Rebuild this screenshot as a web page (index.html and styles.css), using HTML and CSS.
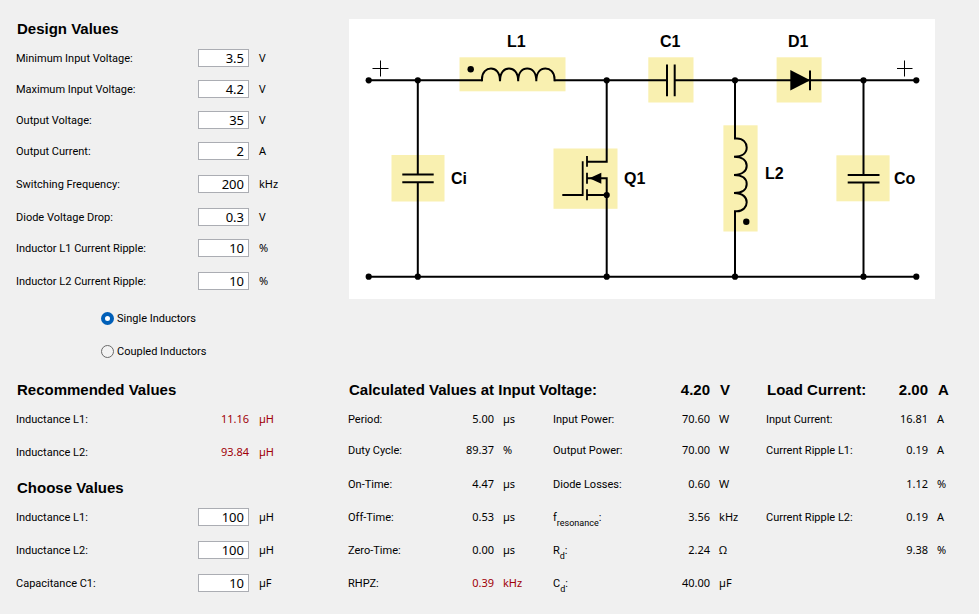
FILE: index.html
```html
<!DOCTYPE html>
<html lang="en">
<head>
<meta charset="utf-8">
<title>SEPIC Converter Calculator</title>
<link rel="stylesheet" href="styles.css">
</head>
<body>
<form class="page">
  <section class="design">
    <h2>Design Values</h2>
    <div class="row"><label for="vmin">Minimum Input Voltage:</label><input id="vmin" type="text" value="3.5"><span class="unit">V</span></div>
    <div class="row"><label for="vmax">Maximum Input Voltage:</label><input id="vmax" type="text" value="4.2"><span class="unit">V</span></div>
    <div class="row"><label for="vout">Output Voltage:</label><input id="vout" type="text" value="35"><span class="unit">V</span></div>
    <div class="row row-loose"><label for="iout">Output Current:</label><input id="iout" type="text" value="2"><span class="unit">A</span></div>
    <div class="row row-loose"><label for="fsw">Switching Frequency:</label><input id="fsw" type="text" value="200"><span class="unit">kHz</span></div>
    <div class="row"><label for="vdiode">Diode Voltage Drop:</label><input id="vdiode" type="text" value="0.3"><span class="unit">V</span></div>
    <div class="row row-loose"><label for="rip1">Inductor L1 Current Ripple:</label><input id="rip1" type="text" value="10"><span class="unit">%</span></div>
    <div class="row row-loose"><label for="rip2">Inductor L2 Current Ripple:</label><input id="rip2" type="text" value="10"><span class="unit">%</span></div>
    <div class="modes">
      <div class="mode"><input id="single" type="radio" name="mode" checked><label for="single">Single Inductors</label></div>
      <div class="mode"><input id="coupled" type="radio" name="mode"><label for="coupled">Coupled Inductors</label></div>
    </div>
  </section>

  <div class="schematic">
    <svg viewBox="0 0 586 280" role="img" aria-label="SEPIC converter schematic">
      <g class="part">
        <rect x="110.5" y="38.3" width="106" height="34"/>
        <rect x="42.5" y="136" width="53" height="46.5"/>
        <rect x="204.5" y="129.5" width="64" height="60.3"/>
        <rect x="299.3" y="38.3" width="45.2" height="45.2"/>
        <rect x="427.6" y="38.3" width="45" height="45.2"/>
        <rect x="374.4" y="106.3" width="34.2" height="106.2"/>
        <rect x="487.4" y="136.3" width="53.2" height="46"/>
      </g>
      <g class="wire">
        <path d="M19.7 61.3H133.3M205.3 61.3H318M325.7 61.3H567.3"/>
        <path d="M19.7 257.7H567.3"/>
        <path d="M133 62.3V60C133 53 137.500 49.500 142 49.500S151 53 151 62.300C151 53 155.500 49.500 160 49.500S169.200 53 169.200 62.300C169.200 53 173.600 49.500 178.200 49.500S187.300 53 187.300 62.300C187.300 53 191.800 49.500 196.400 49.500S205.500 53 205.500 60V62.300"/>
        <path d="M68.800 61.300V155.300M68.800 163.300V257.700M53.300 155.500H84.700M53.300 163.300H84.700"/>
        <path d="M318 45.500V77.200M325.700 45.500V77.200"/>
        <path d="M514.500 61.300V156M514.500 163.500V257.700M498.700 156H530.500M498.700 163.500H530.500"/>
        <path d="M461 51.500V71.200"/>
        <path d="M386 61.300V119.500H388C394 119.500 397.700 123.500 397.700 128.500S394 137.700 385 137.700C394 137.700 397.700 142 397.700 146.700S394 155.900 385 155.900C394 155.900 397.700 160 397.700 165S394 174.100 385 174.100C394 174.100 397.700 178.500 397.700 183.200S394 192.300 388 192.300H386V257.700"/>
        <path d="M257.700 61.300V142.700H238M257.700 257.700V159.300H238M238 176H257.700"/>
      </g>
      <path class="wire thin" d="M238 137V147.700M238 153.700V164.700M238 170.300V181.300M213.300 176H233.700V142.300"/>
      <path class="plus" d="M23.500 49.500H39.500M31.500 41.500V57.500M548 49.500H563.500M555.500 41.500V57.500"/>
      <g class="solid">
        <path d="M441.300 51V71.500L461.300 61.300Z"/>
        <path d="M240.300 159.300L252.300 153.800V164.800Z"/>
        <circle cx="19.700" cy="61.300" r="3.100"/><circle cx="68.800" cy="61.300" r="3.100"/><circle cx="257.700" cy="61.300" r="3.100"/><circle cx="386" cy="61.300" r="3.100"/><circle cx="514.500" cy="61.300" r="3.100"/><circle cx="567.300" cy="61.300" r="3.100"/>
        <circle cx="19.700" cy="257.700" r="3.100"/><circle cx="68.800" cy="257.700" r="3.100"/><circle cx="257.700" cy="257.700" r="3.100"/><circle cx="386" cy="257.700" r="3.100"/><circle cx="514.500" cy="257.700" r="3.100"/><circle cx="567.300" cy="257.700" r="3.100"/>
        <circle cx="257.700" cy="176" r="3.100"/><circle cx="121.700" cy="50.300" r="3.200"/><circle cx="397.300" cy="202.700" r="3.200"/>
      </g>
      <g class="name">
        <text x="158" y="28">L1</text>
        <text x="311" y="28">C1</text>
        <text x="439" y="28">D1</text>
        <text x="102" y="165">Ci</text>
        <text x="275" y="165">Q1</text>
        <text x="416" y="160">L2</text>
        <text x="545" y="165">Co</text>
      </g>
    </svg>
  </div>

  <section class="choose">
    <h2>Recommended Values</h2>
    <div class="row row-loose"><span class="caption">Inductance L1:</span><output class="alert">11.16</output><span class="unit alert">µH</span></div>
    <div class="row row-last"><span class="caption">Inductance L2:</span><output class="alert">93.84</output><span class="unit alert">µH</span></div>
    <h2>Choose Values</h2>
    <div class="row row-loose"><label for="l1">Inductance L1:</label><input id="l1" type="text" value="100"><span class="unit">µH</span></div>
    <div class="row row-loose"><label for="l2">Inductance L2:</label><input id="l2" type="text" value="100"><span class="unit">µH</span></div>
    <div class="row row-loose"><label for="c1">Capacitance C1:</label><input id="c1" type="text" value="10"><span class="unit">µF</span></div>
  </section>

  <table class="results">
    <colgroup>
      <col class="c-name-a"><col class="c-val-a"><col class="c-unit-a">
      <col class="c-name-b"><col class="c-val-b"><col class="c-unit-b">
      <col class="c-name-c"><col class="c-val-c"><col class="c-unit-c">
    </colgroup>
    <thead>
      <tr><th colspan="4">Calculated Values at Input Voltage:</th><th class="val">4.20</th><th class="u">V</th><th>Load Current:</th><th class="val">2.00</th><th class="u">A</th></tr>
    </thead>
    <tbody>
      <tr><td>Period:</td><td class="val">5.00</td><td class="u">µs</td><td>Input Power:</td><td class="val">70.60</td><td class="u">W</td><td>Input Current:</td><td class="val">16.81</td><td class="u">A</td></tr>
      <tr class="wide"><td>Duty Cycle:</td><td class="val">89.37</td><td class="u">%</td><td>Output Power:</td><td class="val">70.00</td><td class="u">W</td><td>Current Ripple L1:</td><td class="val">0.19</td><td class="u">A</td></tr>
      <tr class="loose"><td>On-Time:</td><td class="val">4.47</td><td class="u">µs</td><td>Diode Losses:</td><td class="val">0.60</td><td class="u">W</td><td></td><td class="val">1.12</td><td class="u">%</td></tr>
      <tr class="loose"><td>Off-Time:</td><td class="val">0.53</td><td class="u">µs</td><td>f<sub>resonance</sub>:</td><td class="val">3.56</td><td class="u">kHz</td><td>Current Ripple L2:</td><td class="val">0.19</td><td class="u">A</td></tr>
      <tr class="loose"><td>Zero-Time:</td><td class="val">0.00</td><td class="u">µs</td><td>R<sub>d</sub>:</td><td class="val">2.24</td><td class="u">Ω</td><td></td><td class="val">9.38</td><td class="u">%</td></tr>
      <tr class="loose"><td>RHPZ:</td><td class="val alert">0.39</td><td class="u alert">kHz</td><td>C<sub>d</sub>:</td><td class="val">40.00</td><td class="u">µF</td><td></td><td></td><td></td></tr>
    </tbody>
  </table>
</form>
</body>
</html>
```
FILE: styles.css
```css
* { box-sizing: border-box; }

body {
  margin: 0;
  background: #f0f0f0;
  color: #000;
  font: 11px/20px Roboto, "Noto Sans", sans-serif;
}

.page {
  display: grid;
  grid-template-columns: 332px minmax(0, 1fr);
  padding: 19px 0 0 16px;
}

h2, .results th {
  font: bold 15px/18px "Liberation Sans", sans-serif;
}

h2 {
  height: 29px;
  margin: 0;
  padding-left: 1px;
}

.design { padding-top: 1px; }

/* label / value / unit line */
.row {
  display: grid;
  grid-template-columns: 182px 51px 1fr;
  align-items: start;
  height: 31px;
}
.row-loose { height: 33px; }
.row-last { height: 36px; }

.row input {
  width: 100%;
  height: 18px;
  margin: 0;
  padding: 0 4px;
  border: 1px solid #abadb3;
  background: #fff;
  color: #000;
  font: 13px/16px "Noto Sans", sans-serif;
  text-align: right;
}

output, .unit, .results td.val, .results td.u {
  font-family: "Noto Sans", sans-serif;
  line-height: 18px;
}
output { text-align: right; }
.unit { padding-left: 10px; }
.alert { color: #a00008; }

.modes {
  padding: 4px 0 0 85px;
}
.mode {
  display: flex;
  align-items: flex-start;
  gap: 3px;
  height: 33px;
}
.mode:last-child { height: 39px; }
.mode input {
  appearance: none;
  width: 13px;
  height: 13px;
  margin: 3px 0 0;
  border: 1px solid #6a6a6a;
  border-radius: 50%;
  background: #f3f3f3;
}
.mode input:checked {
  border: 4px solid #005fb8;
  background: #fff;
}

.schematic { padding: 0 44px 0 1px; }
.schematic svg {
  display: block;
  width: 100%;
  background: #fff;
}
.part { fill: #f9f0b0; }
.wire { fill: none; stroke: #000; stroke-width: 2; }
.thin { stroke-width: 1.8; }
.plus { fill: none; stroke: #000; stroke-width: 1; }
.solid { fill: #000; }
.name { font: bold 16px "Liberation Sans", sans-serif; }

.results {
  width: 100%;
  align-self: start;
  table-layout: fixed;
  border-collapse: collapse;
}
.c-name-a { width: 96px; }
.c-val-a { width: 50px; }
.c-unit-a { width: 59px; }
.c-name-b { width: 101px; }
.c-val-b { width: 56px; }
.c-unit-b { width: 56px; }
.c-name-c { width: 107px; }
.c-val-c { width: 55px; }
.c-unit-c { width: 51px; }

.results th, .results td {
  padding: 0;
  text-align: left;
  vertical-align: top;
  white-space: nowrap;
}
.results th { padding-left: 1px; }
.results tr { height: 31px; }
.results thead tr { height: 29px; }
.results .wide { height: 34px; }
.results .loose { height: 33px; }
.results .val { text-align: right; }
.results td.u { padding-left: 9px; }
.results th.u { padding-left: 10px; }

sub {
  position: relative;
  top: 5px;
  font-size: 9px;
  line-height: 1;
  vertical-align: baseline;
}
```
